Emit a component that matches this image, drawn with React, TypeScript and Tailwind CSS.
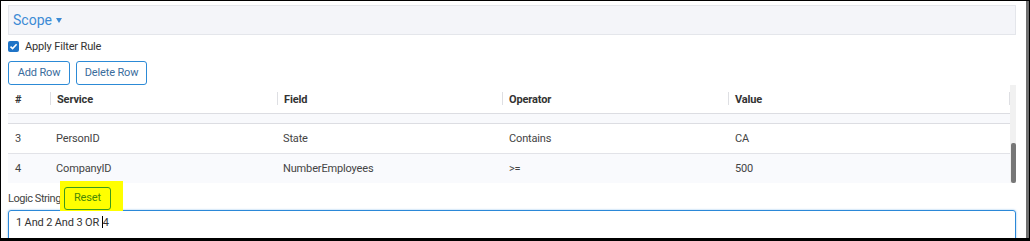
import React from "react";

const cols = "grid grid-cols-[42px_227px_225px_226px_282px]";

function HeaderCell({ children, sep = true, last = false }: { children?: React.ReactNode; sep?: boolean; last?: boolean }) {
  return (
    <div className="relative flex items-center pl-[7px] h-full">
      {sep && <span className="absolute left-0 top-[7px] h-[13px] w-px bg-[#dedfe3]" />}
      {last && <span className="absolute right-0 top-[7px] h-[13px] w-px bg-[#dedfe3]" />}
      <span className="pt-[3px]">{children}</span>
    </div>
  );
}

function Row({ cells, bg }: { cells: string[]; bg: string }) {
  return (
    <div className={`${cols} h-[29px] pt-[1px] items-center text-[11px] tracking-[-0.15px] text-[#444] ${bg}`}>
      {cells.map((c, i) => (
        <div key={i} className={i === 1 ? "pl-[6px]" : i === 2 ? "pl-[6px]" : "pl-[7px]"}>
          {c}
        </div>
      ))}
    </div>
  );
}

export default function App() {
  return (
    <div className="w-[1030px] h-[241px] overflow-hidden bg-white border-l border-t border-black border-b-[3px] font-['Roboto',sans-serif] flex">
      <div className="flex-1 pl-[7px] pt-[4px]">
        <div className="w-[1008px]">
          {/* Scope header */}
          <div className="h-[30px] bg-[#f4f5f9] border border-[#e4e6eb] flex items-center pl-[4px]">
            <span className="text-[14px] text-[#3d8bd5] leading-none">Scope</span>
            <span className="ml-[4px] mt-[1px] w-0 h-0 border-l-[3px] border-r-[3px] border-t-[5px] border-l-transparent border-r-transparent border-t-[#3d8bd5]" />
          </div>

          {/* Checkbox */}
          <div className="mt-[6px] flex items-center h-[11px]">
            <span className="w-[11px] h-[11px] rounded-[2px] bg-[#1f74c7] flex items-center justify-center">
              <svg width="9" height="9" viewBox="0 0 9 9">
                <path d="M1.5 4.6 L3.6 6.6 L7.6 2.3" fill="none" stroke="white" strokeWidth="1.6" />
              </svg>
            </span>
            <span className="ml-[6px] text-[11px] tracking-[-0.15px] text-[#333] leading-none">Apply Filter Rule</span>
          </div>

          {/* Buttons */}
          <div className="mt-[9px] flex gap-[6px]">
            <button className="h-[24px] w-[62px] border border-[#2c8ad6] rounded-[3px] text-[11px] tracking-[-0.15px] text-[#3a6c9c] bg-white">Add Row</button>
            <button className="h-[24px] w-[71px] border border-[#2c8ad6] rounded-[3px] text-[11px] tracking-[-0.15px] text-[#3a6c9c] bg-white">Delete Row</button>
          </div>

          {/* Table */}
          <div className="flex h-[98px]">
            <div className="w-[1002px]">
              <div className={`${cols} h-[29px] text-[11px] tracking-[-0.15px] font-bold text-[#333] border-b border-[#dcdde2]`}>
                <HeaderCell sep={false}>#</HeaderCell>
                <HeaderCell>Service</HeaderCell>
                <HeaderCell>Field</HeaderCell>
                <HeaderCell>Operator</HeaderCell>
                <HeaderCell last>Value</HeaderCell>
              </div>
              <div className="h-[10px] bg-[#f8f9fc] border-b border-[#dcdde2]" />
              <div className="border-b border-[#e2e3e8]">
                <Row cells={["3", "PersonID", "State", "Contains", "CA"]} bg="bg-white" />
              </div>
              <Row cells={["4", "CompanyID", "NumberEmployees", ">=", "500"]} bg="bg-[#f9fafd]" />
            </div>
            <div className="w-[6px] bg-[#f1f1f1] relative">
              <div className="absolute left-px top-[58px] w-[5px] h-[40px] rounded-[2px] bg-[#777]" />
            </div>
          </div>

          {/* Logic string */}
          <div className="h-[27px] flex items-start">
            <span className="mt-[9px] text-[11px] tracking-[-0.45px] text-[#444] leading-[13px] whitespace-nowrap">Logic String</span>
            <span className="relative z-10 -mt-[2px] ml-[-1px] inline-flex bg-[#ffff00] pl-[4px] pr-[12px] pt-[6px] pb-[1px]">
              <button className="h-[23px] w-[47px] border border-[#3c9a1c] rounded-[3px] text-[11px] tracking-[-0.15px] text-[#4a8a05]">Reset</button>
            </span>
          </div>

          {/* Textarea */}
          <div className="h-[60px] border border-[#2b88d8] rounded-[3px] shadow-[0_0_2px_rgba(43,136,216,0.6)] pl-[7px] pt-[5px] text-[11px] tracking-[-0.15px] text-[#333] leading-[14px] whitespace-pre">
            <span>1 And 2 And 3 OR </span>
            <span className="inline-block w-px h-[12px] bg-black align-[-2px]" />
            <span>4</span>
          </div>
        </div>
      </div>
      <div className="w-[3px] bg-[#6e6e6e]" />
      <div className="w-px bg-black" />
    </div>
  );
}
